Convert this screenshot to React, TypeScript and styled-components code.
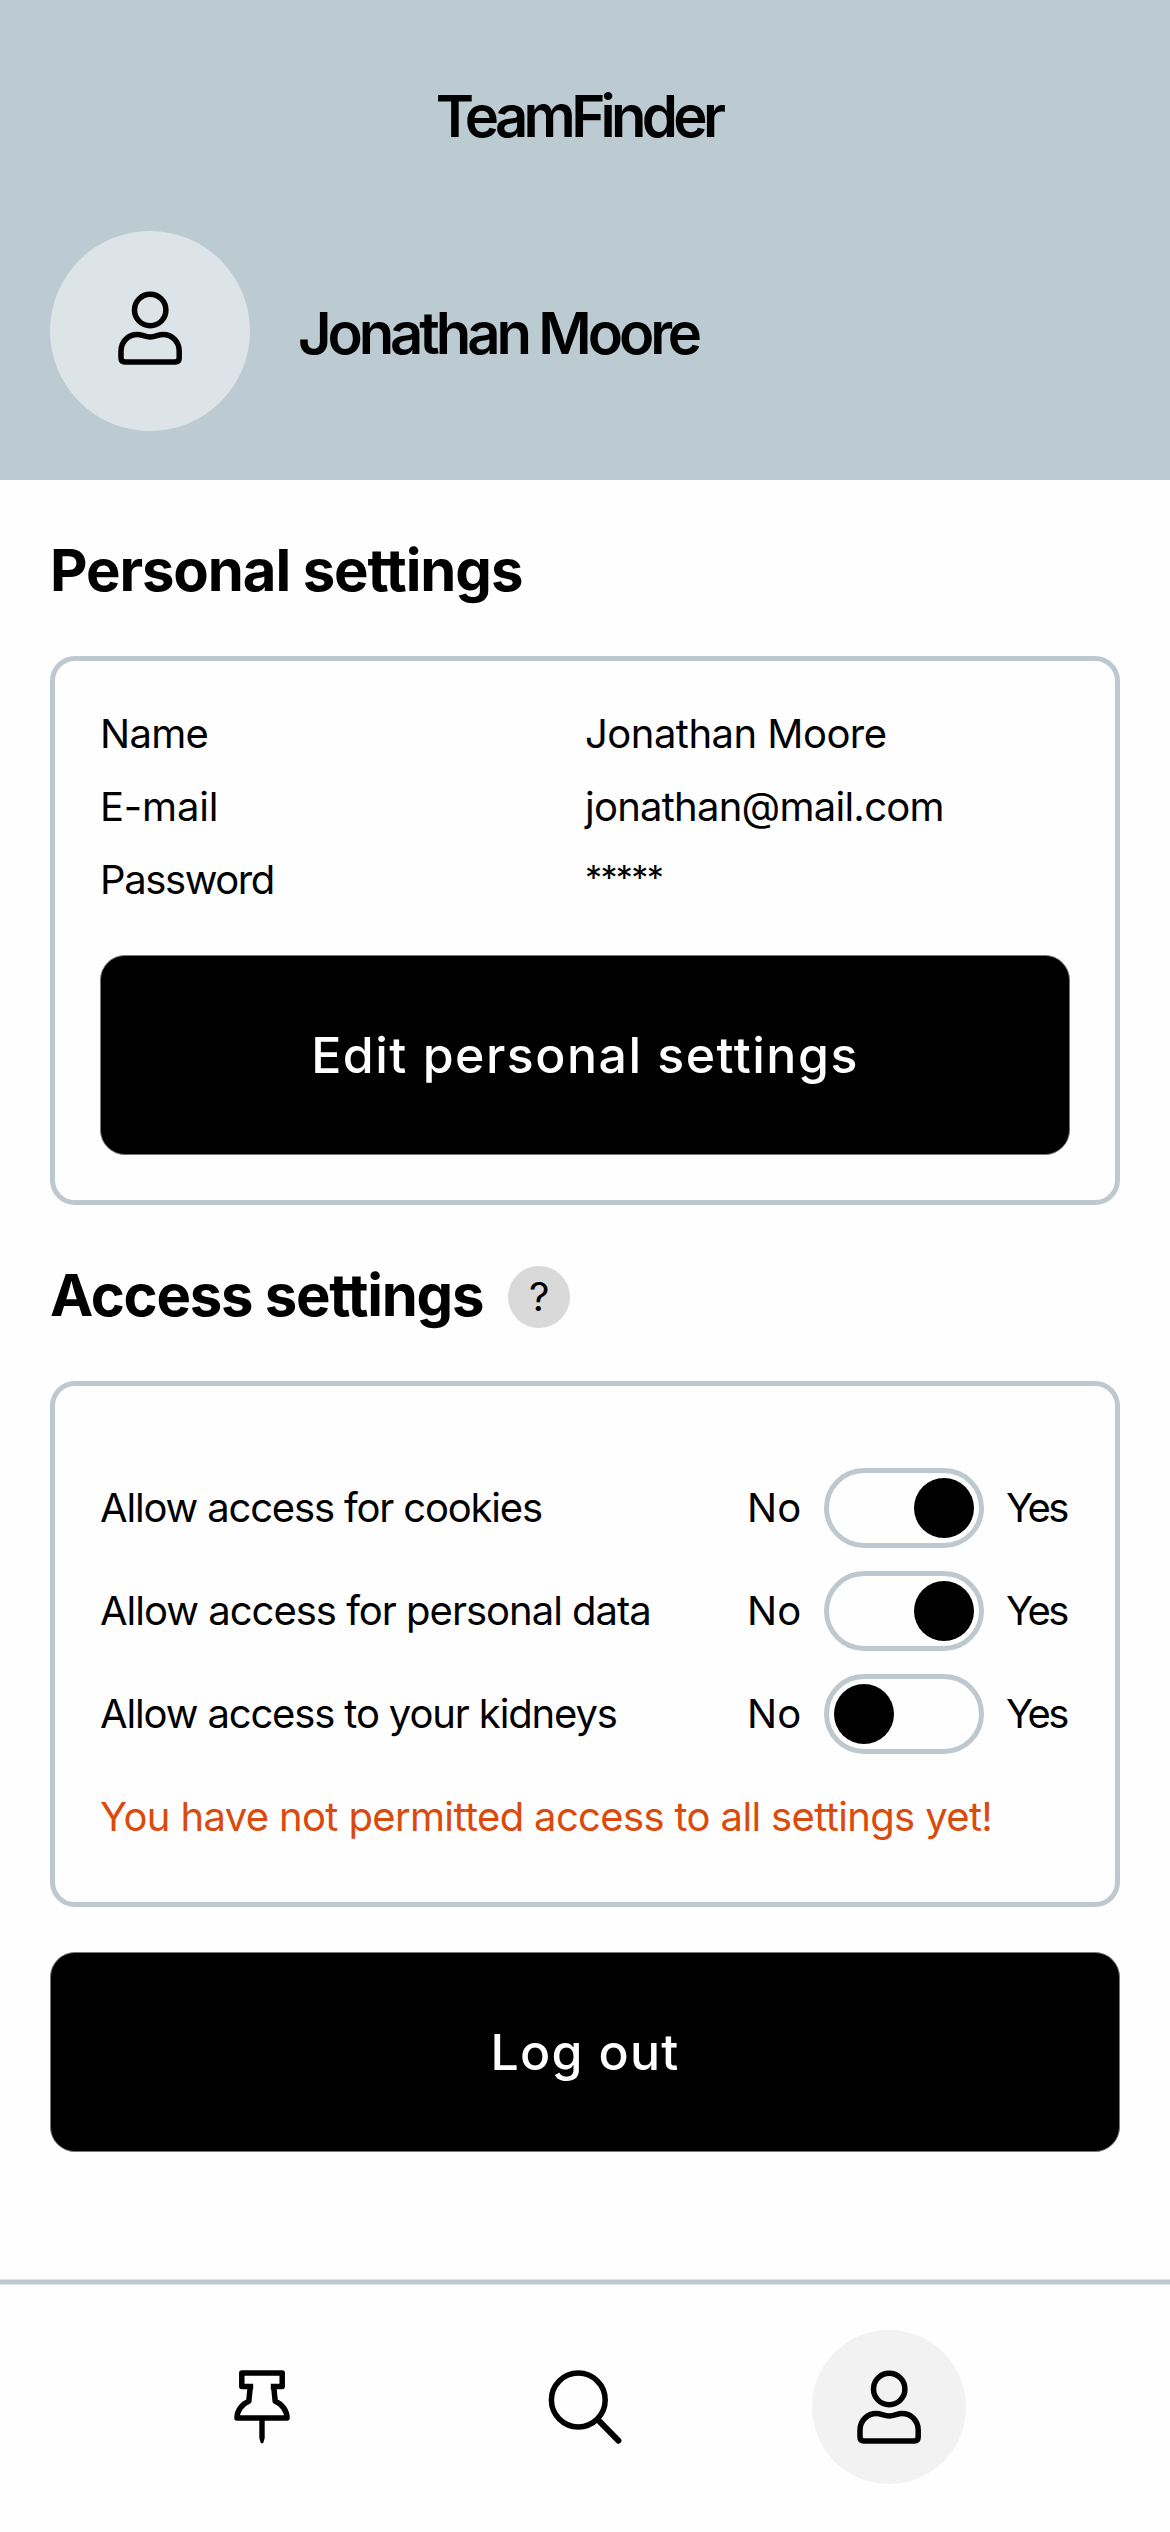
import React, { useState } from "react";
import styled, { createGlobalStyle } from "styled-components";

const mist = "#bccad1";
const outline = "#bdc8cf";

const GlobalStyle = createGlobalStyle`
  *, *::before, *::after { box-sizing: border-box; }
  body {
    margin: 0;
    background: #fefefe;
    color: #000;
    font-family: Inter, "Liberation Sans", sans-serif;
  }
  h1, h2, p { margin: 0; }
`;

const Screen = styled.div`
  display: flex;
  flex-direction: column;
  width: 1170px;
  height: 2532px;
  overflow: hidden;
`;

const Header = styled.header`
  flex: none;
  height: 480px;
  padding: 81px 50px 0;
  background: ${mist};
`;

const AppTitle = styled.h1`
  height: 70px;
  padding-right: 13px;
  font-size: 58px;
  line-height: 70px;
  font-weight: 600;
  letter-spacing: -4.7px;
  text-align: center;
`;

const Profile = styled.div`
  display: flex;
  align-items: center;
  gap: 48px;
  margin-top: 80px;
`;

const Avatar = styled.div`
  display: flex;
  align-items: center;
  justify-content: center;
  width: 200px;
  height: 200px;
  padding-bottom: 6px;
  border-radius: 50%;
  background: #dde4e7;
`;

const ProfileName = styled.p`
  padding-top: 4px;
  font-size: 58px;
  line-height: 70px;
  font-weight: 600;
  letter-spacing: -4.1px;
`;

const Main = styled.main`
  flex: 1;
  padding: 60px 50px 0;
`;

const Heading = styled.h2<{ $tracking: number }>`
  font-size: 58px;
  line-height: 60px;
  font-weight: 700;
  letter-spacing: ${(p) => p.$tracking}px;
  white-space: nowrap;
`;

const Card = styled.section<{ $top: number }>`
  padding: ${(p) => p.$top}px 45px 45px;
  border: 5px solid ${outline};
  border-radius: 25px;
`;

const PersonalCard = styled(Card)`
  margin-top: 56px;
`;

const AccessCard = styled(Card)`
  display: flex;
  flex-direction: column;
  gap: 23px;
  margin-top: 53px;
`;

const Details = styled.div`
  margin-bottom: 39px;
`;

const DetailRow = styled.div`
  display: grid;
  grid-template-columns: 1fr 1fr;
  align-items: center;
  height: 73px;
`;

const Text = styled.span<{ $tracking?: number }>`
  font-size: 40px;
  line-height: 48px;
  letter-spacing: ${(p) => p.$tracking ?? 0}px;
  white-space: nowrap;
`;

const Mask = styled(Text)`
  padding-bottom: 3px;
  font-size: 34px;
`;

const Button = styled.button<{ $tracking: number }>`
  display: block;
  width: 100%;
  height: 200px;
  padding: 0;
  border: 1px solid #777;
  border-radius: 25px;
  background: #000;
  color: #fff;
  font-family: inherit;
  font-size: 50px;
  font-weight: 500;
  letter-spacing: ${(p) => p.$tracking}px;
`;

const LogoutButton = styled(Button)`
  margin-top: 45px;
`;

const HeadingRow = styled.div`
  display: flex;
  align-items: center;
  gap: 25px;
  height: 62px;
  margin-top: 61px;

  ${Heading} {
    padding-bottom: 4px;
  }
`;

const Help = styled.div`
  display: flex;
  align-items: center;
  justify-content: center;
  width: 62px;
  height: 62px;
  border-radius: 50%;
  background: #d9d9d9;
`;

const ToggleRow = styled.div`
  display: grid;
  grid-template-columns: 1fr 55px 160px 64px;
  column-gap: 22px;
  align-items: center;
  height: 80px;
`;

const Track = styled.button<{ $on: boolean }>`
  display: flex;
  justify-content: ${(p) => (p.$on ? "flex-end" : "flex-start")};
  width: 160px;
  height: 80px;
  padding: 5px;
  border: 5px solid ${outline};
  border-radius: 40px;
  background: transparent;
`;

const Knob = styled.span`
  width: 60px;
  height: 60px;
  border-radius: 50%;
  background: #000;
`;

const Warning = styled.p`
  height: 80px;
  color: #db4a0b;
  font-size: 40px;
  line-height: 80px;
  letter-spacing: -0.64px;
  white-space: nowrap;
`;

const NavBar = styled.nav`
  display: grid;
  grid-template-columns: 323px 304px 154px;
  flex: none;
  height: 252px;
  padding: 46px 0 0 185px;
  border-top: 4px solid ${outline};
  box-shadow: 0 -1px 0 #dde3e7, inset 0 1px 0 #dde3e7;
`;

const NavItem = styled.a<{ $active?: boolean }>`
  display: flex;
  align-items: center;
  justify-content: center;
  width: 154px;
  height: 154px;
  border-radius: 50%;
  background: ${(p) => (p.$active ? "#f2f2f2" : "transparent")};
`;

const Icon = styled.svg`
  display: block;
  flex: none;
  fill: none;
  stroke: #000;
  stroke-width: 5.5;
`;

const PersonIcon = () => (
  <Icon width="64" height="74" viewBox="0 0 64 74">
    <circle cx="32.2" cy="19" r="15.7" />
    <path d="M3 60C3 50.5 10.4 43.5 19.4 43.5C24 43.5 27 46 32.2 46C37.4 46 40.4 43.5 45 43.5C54 43.5 61.2 50.5 61.2 60V67Q61.2 70.9 57.3 70.9H6.9Q3 70.9 3 67Z" />
  </Icon>
);

const PinIcon = () => (
  <Icon width="56" height="74" viewBox="0 0 56 74">
    <path strokeLinejoin="round" d="M19.2 16.5H7.8V3.1H48.2V16.5H36.8" />
    <path strokeLinejoin="round" d="M16.3 16.5L14.8 31.2C8 34 3 40.5 3 48H53C53 40.5 48 34 41.2 31.2L39.7 16.5" />
    <path stroke="none" fill="#000" d="M25.3 48H30.7V68L29.4 72.4Q28 74.2 26.6 72.4L25.3 68Z" />
  </Icon>
);

const SearchIcon = () => (
  <Icon width="74" height="74" viewBox="0 0 74 74">
    <circle cx="30.3" cy="30" r="26.9" />
    <path strokeLinecap="round" strokeWidth="6" d="M51 50.8L70.4 70.7" />
  </Icon>
);

const permissions = [
  { label: "Allow access for cookies", tracking: -1.17, on: true },
  { label: "Allow access for personal data", tracking: -1, on: true },
  { label: "Allow access to your kidneys", tracking: -1.14, on: false },
];

export default function App() {
  const [allowed, setAllowed] = useState(permissions.map((p) => p.on));
  const toggle = (index: number) =>
    setAllowed((prev) => prev.map((value, i) => (i === index ? !value : value)));

  return (
    <Screen>
      <GlobalStyle />
      <Header>
        <AppTitle>TeamFinder</AppTitle>
        <Profile>
          <Avatar>
            <PersonIcon />
          </Avatar>
          <ProfileName>Jonathan Moore</ProfileName>
        </Profile>
      </Header>

      <Main>
        <Heading $tracking={-1.1}>Personal settings</Heading>
        <PersonalCard $top={36}>
          <Details>
            <DetailRow>
              <Text $tracking={-0.7}>Name</Text>
              <Text $tracking={-0.52}>Jonathan Moore</Text>
            </DetailRow>
            <DetailRow>
              <Text $tracking={-0.2}>E-mail</Text>
              <Text $tracking={-0.75}>jonathan@mail.com</Text>
            </DetailRow>
            <DetailRow>
              <Text $tracking={-1.4}>Password</Text>
              <Mask $tracking={-1.6}>*****</Mask>
            </DetailRow>
          </Details>
          <Button $tracking={1.5}>Edit personal settings</Button>
        </PersonalCard>

        <HeadingRow>
          <Heading $tracking={-1.25}>Access settings</Heading>
          <Help>
            <Text>?</Text>
          </Help>
        </HeadingRow>
        <AccessCard $top={82}>
          {permissions.map((item, i) => (
            <ToggleRow key={item.label}>
              <Text $tracking={item.tracking}>{item.label}</Text>
              <Text>No</Text>
              <Track $on={allowed[i]} aria-label={item.label} onClick={() => toggle(i)}>
                <Knob />
              </Track>
              <Text $tracking={-2.6}>Yes</Text>
            </ToggleRow>
          ))}
          <Warning>You have not permitted access to all settings yet!</Warning>
        </AccessCard>

        <LogoutButton $tracking={1.3}>Log out</LogoutButton>
      </Main>

      <NavBar>
        <NavItem>
          <PinIcon />
        </NavItem>
        <NavItem>
          <SearchIcon />
        </NavItem>
        <NavItem $active>
          <PersonIcon />
        </NavItem>
      </NavBar>
    </Screen>
  );
}
